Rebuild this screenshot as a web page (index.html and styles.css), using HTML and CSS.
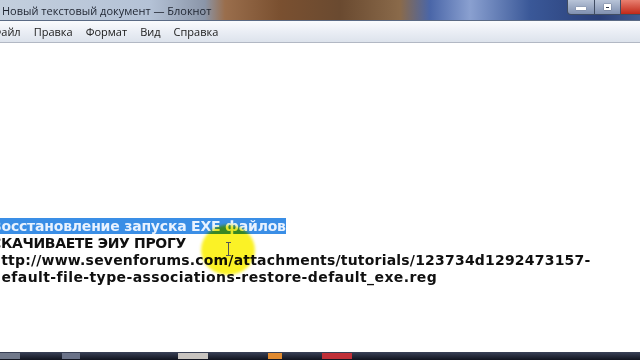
FILE: index.html
```html
<!DOCTYPE html>
<html>
<head>
<meta charset="utf-8">
<link rel="stylesheet" href="styles.css">
</head>
<body>
<div class="window">
  <div class="titlebar">
    <span class="title">Новый текстовый документ — Блокнот</span>
    <div class="controls">
      <div class="btn min"><span class="min-glyph"></span></div>
      <div class="btn max"><span class="max-glyph"></span></div>
      <div class="btn close"></div>
    </div>
  </div>
  <div class="menubar">
    <span class="menu first">Файл</span>
    <span class="menu">Правка</span>
    <span class="menu">Формат</span>
    <span class="menu">Вид</span>
    <span class="menu">Справка</span>
  </div>
  <div class="editor">
    <div class="lines">
      <div class="line l1"><span class="sel">Восстановление запуска EXE файлов</span></div>
      <div class="line l2">СКАЧИВАЕТЕ ЭИУ ПРОГУ</div>
      <div class="line l3">http://www.sevenforums.com/attachments/tutorials/123734d1292473157-</div>
      <div class="line l4">default-file-type-associations-restore-default_exe.reg</div>
    </div>
    <div class="spot"></div>
    <div class="ibeam"></div>
  </div>
  <div class="taskbar">
    <span class="tb t1"></span>
    <span class="tb t2"></span>
    <span class="tb t3"></span>
    <span class="tb t4"></span>
    <span class="tb t5"></span>
  </div>
</div>
</body>
</html>
```

FILE: styles.css
```css
html, body {
  margin: 0;
  padding: 0;
  width: 640px;
  height: 360px;
  overflow: hidden;
  background: #ffffff;
}
.window {
  width: 640px;
  height: 360px;
  display: flex;
  flex-direction: column;
  font-family: "Open Sans", "Noto Sans", sans-serif;
}
.titlebar {
  height: 20px;
  flex: none;
  display: flex;
  align-items: center;
  justify-content: space-between;
  background: linear-gradient(90deg, #c3cfdd 0px, #b4c2d6 150px, #8a95a8 205px, #9a6e4c 225px, #7a5030 280px, #6a4a30 340px, #8a6a4a 400px, #4a66a8 430px, #8aa0d0 470px, #3a5898 530px, #2a3f78 600px, #405a90 640px);
  border-bottom: 1px solid #5a6a84;
  position: relative;
}
.title {
  font-size: 11px;
  color: #1e2430;
  padding-left: 2px;
  white-space: nowrap;
}
.controls {
  display: flex;
  align-self: flex-start;
  height: 15px;
  margin-right: -4px;
}
.btn {
  height: 14px;
  border: 1px solid #404c62;
  border-top: none;
  display: flex;
  align-items: center;
  justify-content: center;
}
.min {
  width: 26px;
  background: linear-gradient(#b8c4d8, #8090b0);
  border-radius: 0 0 0 4px;
}
.max {
  width: 25px;
  background: linear-gradient(#b8c4d8, #8090b0);
  border-left: none;
}
.close {
  width: 22px;
  background: linear-gradient(#e88070, #c02818);
  border-left: none;
}
.min-glyph {
  width: 10px;
  height: 3px;
  background: #ffffff;
  margin-top: 3px;
  box-shadow: 0 0 1px #303848;
}
.max-glyph {
  width: 7px;
  height: 6px;
  border: 2px solid #ffffff;
  border-top-width: 3px;
  box-sizing: border-box;
  background: #30384a;
  box-shadow: 0 0 1px #303848;
}
.menubar {
  height: 21px;
  flex: none;
  display: flex;
  align-items: center;
  background: linear-gradient(#fafbfd, #e9edf4 55%, #dde3ec);
  border-bottom: 1px solid #b2b8c4;
  font-size: 11px;
  color: #1a1a1a;
  overflow: hidden;
}
.menu {
  padding: 0 6.5px;
  white-space: nowrap;
}
.first {
  margin-left: -14px;
}
.editor {
  flex: 1;
  position: relative;
  overflow: hidden;
  background: #ffffff;
  padding-top: 175px;
}
.lines {
  margin-left: -9px;
  font-family: "DejaVu Sans", sans-serif;
  font-weight: bold;
  font-size: 14px;
  line-height: 17px;
  color: #101010;
  white-space: nowrap;
}
.line {
  height: 17px;
}
.l1 { letter-spacing: -0.2px; }
.l2 { letter-spacing: -0.35px; }
.l3 { letter-spacing: 0.2px; }
.l4 { letter-spacing: 0.4px; }
.sel {
  background: #3a8ee6;
  color: #e8f2ff;
  display: inline-block;
  height: 16px;
}
.spot {
  position: absolute;
  left: 201px;
  top: 182px;
  width: 54px;
  height: 50px;
  border-radius: 50%;
  background: rgba(250, 240, 0, 0.85);
  filter: blur(1.5px);
  mix-blend-mode: multiply;
}
.ibeam {
  position: absolute;
  left: 228px;
  top: 199px;
  width: 1px;
  height: 14px;
  background: #555;
}
.ibeam::before, .ibeam::after {
  content: "";
  position: absolute;
  left: -2px;
  width: 5px;
  height: 1px;
  background: #555;
}
.ibeam::before { top: 0; }
.ibeam::after { bottom: 0; }
.taskbar {
  height: 8px;
  flex: none;
  display: flex;
  align-items: center;
  background: linear-gradient(#3a4258, #10131e);
}
.tb {
  height: 6px;
  display: block;
}
.t1 { width: 20px; margin-left: 0; background: #70788a; }
.t2 { width: 18px; margin-left: 42px; background: #6a7288; }
.t3 { width: 30px; margin-left: 98px; background: #c8c4c0; }
.t4 { width: 14px; margin-left: 60px; background: #e08a30; }
.t5 { width: 30px; margin-left: 40px; background: #c03038; }
```
